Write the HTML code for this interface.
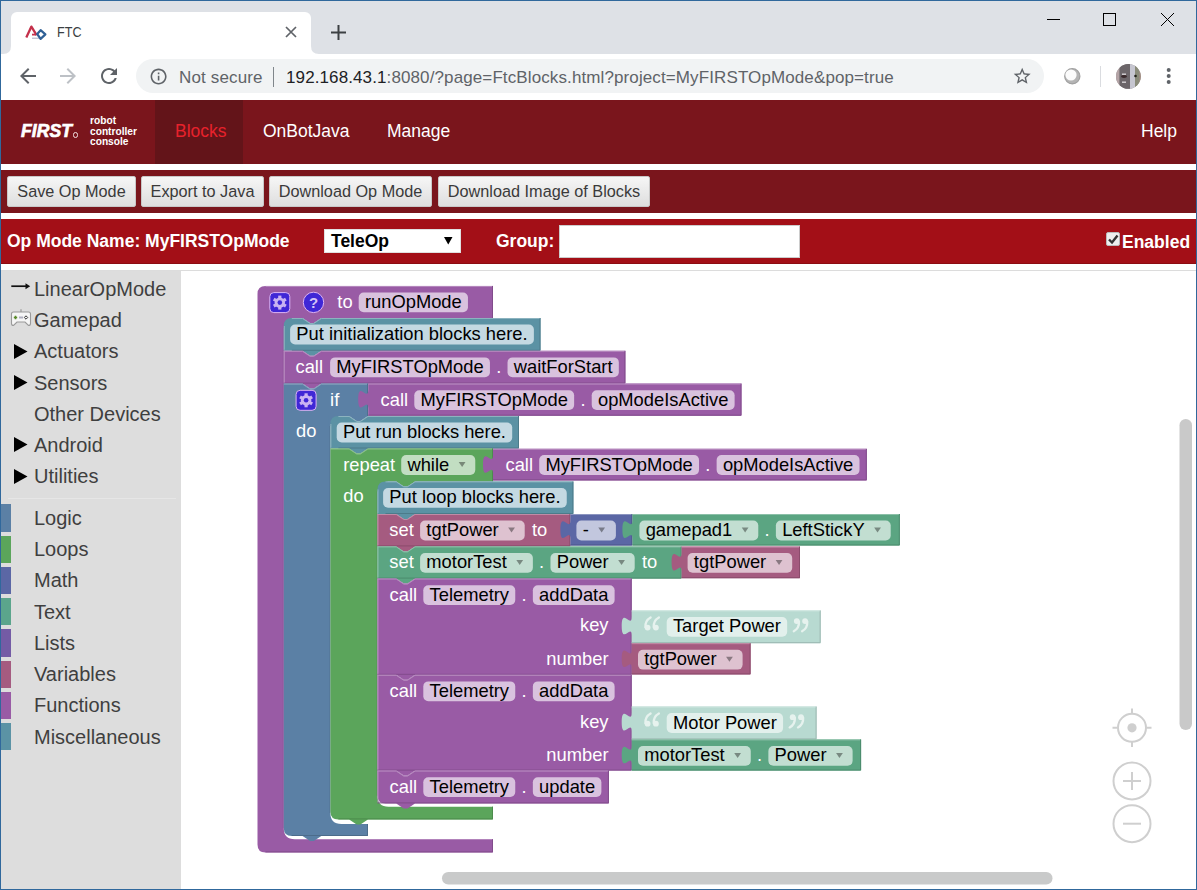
<!DOCTYPE html>
<html><head><meta charset="utf-8">
<style>
*{box-sizing:border-box;margin:0;padding:0}
html,body{width:1197px;height:890px;overflow:hidden;background:#fff;font-family:"Liberation Sans",sans-serif;position:relative}
.a{position:absolute}
#tabstrip{left:0;top:0;width:1197px;height:54px;background:#dee1e6}
#tab{left:10.5px;top:12px;width:300.5px;height:42px;background:#fff;border-radius:6px 6px 0 0}
#toolbar{left:0;top:54px;width:1197px;height:46px;background:#fff}
#omni{left:136px;top:59px;width:908px;height:34px;background:#f1f3f4;border-radius:17px}
.ct{color:#3c4043;font-size:17px;white-space:nowrap}
#hdr{left:0;top:100px;width:1197px;height:63.5px;background:#7a151c}
#hdrsel{left:155px;top:100px;width:88.3px;height:63.5px;background:#631419}
.nav{color:#fff;font-size:17.5px;top:121px}
#btnrow{left:0;top:170px;width:1197px;height:42.5px;background:#7a151c}
.btn{top:176px;height:31px;background:linear-gradient(#f6f6f6,#dedede);border:1px solid #c8c8c8;border-radius:2px;color:#3a3a3a;font-size:16.25px;line-height:29px;text-align:center;white-space:nowrap}
#oprow{left:0;top:219px;width:1197px;height:44.5px;background:#a30f17;box-shadow:inset 0 -1px #8c0c12}
.lbl{color:#fff;font-weight:bold;font-size:17.5px;top:231.2px;white-space:nowrap}
#toolbox{left:0;top:270.5px;width:180.7px;height:620px;background:#dddddd}
.ti{left:34px;font-size:20px;color:#3f3f3f;white-space:nowrap}
.cb{left:1px;width:9.8px;height:28px}
#border{left:0;top:0;width:1197px;height:890px;border:1px solid #30689c;border-right-width:1px;pointer-events:none}
</style></head><body>

<div class="a" id="tabstrip"></div>
<div class="a" id="tab"></div>
<svg class="a" style="left:2.5px;top:46px" width="11" height="8"><path d="M0 8 Q8 8 8 0 L11 0 L11 8Z" fill="#fff"/></svg>
<svg class="a" style="left:308px;top:46px" width="11" height="8"><path d="M11 8 Q3 8 3 0 L0 0 L0 8Z" fill="#fff"/></svg>
<svg class="a" style="left:22px;top:22px" width="28" height="22" viewBox="0 0 28 22">
 <path d="M4.3 15.4 L9.4 4.6 L14.6 13.2" fill="none" stroke="#c4304a" stroke-width="2.3" stroke-linejoin="round"/>
 <path d="M10 12.6 H14.2" stroke="#c4304a" stroke-width="1.8"/>
 <path d="M10 16.2 H18" stroke="#a8a8c0" stroke-width="1"/>
 <path d="M15.2 12 L18.6 8.2 L23.4 12.4 L18.6 16.9 Z" fill="none" stroke="#2f6096" stroke-width="2.2" stroke-linejoin="round"/>
</svg>
<div class="a ct" style="left:56.5px;top:23px;font-size:15px;color:#3c4043;transform:scaleX(0.84);transform-origin:0 0">FTC</div>
<svg class="a" style="left:285px;top:26px" width="12" height="12"><path d="M1 1L11 11M11 1L1 11" stroke="#5f6368" stroke-width="1.7"/></svg>
<svg class="a" style="left:330px;top:24px" width="17" height="17"><path d="M8.5 1V16M1 8.5H16" stroke="#3c4043" stroke-width="2"/></svg>
<svg class="a" style="left:1046px;top:14px" width="16" height="12"><path d="M1 5.5H14" stroke="#000" stroke-width="1"/></svg>
<svg class="a" style="left:1102px;top:12px" width="16" height="16"><rect x="1.5" y="1.5" width="12" height="12" fill="none" stroke="#000" stroke-width="1"/></svg>
<svg class="a" style="left:1160px;top:12px" width="16" height="16"><path d="M1 1L14 14M14 1L1 14" stroke="#000" stroke-width="1"/></svg>
<div class="a" id="toolbar"></div>
<div class="a" id="omni"></div>
<svg class="a" style="left:16.4px;top:63.8px" width="24" height="24" viewBox="0 0 24 24"><path d="M20 11H7.83l5.59-5.59L12 4l-8 8 8 8 1.41-1.41L7.83 13H20v-2z" fill="#5f6368"/></svg>
<svg class="a" style="left:56.2px;top:63.8px" width="24" height="24" viewBox="0 0 24 24"><path d="M12 4l-1.41 1.41L16.17 11H4v2h12.17l-5.58 5.59L12 20l8-8z" fill="#bdc1c6"/></svg>
<svg class="a" style="left:96.7px;top:64px" width="24" height="24" viewBox="0 0 24 24"><path d="M17.65 6.35C16.2 4.9 14.21 4 12 4c-4.42 0-7.99 3.58-7.99 8s3.57 8 7.99 8c3.73 0 6.84-2.55 7.73-6h-2.08c-.82 2.33-3.04 4-5.65 4-3.31 0-6-2.690-6-6s2.69-6 6-6c1.66 0 3.14.69 4.22 1.78L13 11h7V4l-2.35 2.35z" fill="#5f6368"/></svg>
<svg class="a" style="left:148.8px;top:66.8px" width="19.2" height="19.2" viewBox="0 0 24 24"><path d="M11 7h2v2h-2zm0 4h2v6h-2zm1-9C6.480 2 2 6.48 2 12s4.48 10 10 10 10-4.48 10-10S17.52 2 12 2zm0 18c-4.41 0-8-3.59-8-8s3.59-8 8-8 8 3.59 8 8-3.59 8-8 8z" fill="#5f6368"/></svg>
<div class="a ct" style="left:179px;top:67.5px;color:#5f6368;letter-spacing:0.15px">Not secure</div>
<div class="a" style="left:272.5px;top:67px;width:1px;height:20px;background:#80868b"></div>
<div class="a ct" style="left:286px;top:67.5px;color:#202124;letter-spacing:0.11px">192.168.43.1<span style="color:#5f6368">:8080/?page=FtcBlocks.html?project=MyFIRSTOpMode&amp;pop=true</span></div>
<svg class="a" style="left:1011.8px;top:65.8px" width="20.4" height="20.4" viewBox="0 0 24 24"><path d="M22 9.24l-7.19-.62L12 2 9.19 8.63 2 9.240l5.46 4.73L5.82 21 12 17.27 18.18 21l-1.63-7.03L22 9.24zM12 15.4l-3.76 2.27 1-4.28-3.32-2.88 4.38-.38L12 6.1l1.71 4.04 4.38.38-3.32 2.88 1 4.28L12 15.4z" fill="#5f6368"/></svg>
<svg class="a" style="left:1062px;top:66px" width="20" height="20"><circle cx="10.3" cy="10.3" r="7.6" fill="#b4b4b4" stroke="#a0a0a0" stroke-width="1.2"/><circle cx="9" cy="9" r="5.6" fill="#fbfbfb"/></svg>
<div class="a" style="left:1100px;top:66px;width:1px;height:21px;background:#dadce0"></div>
<svg class="a" style="left:1116px;top:64px" width="25" height="25"><defs><clipPath id="av"><circle cx="12.4" cy="12.4" r="12.4"/></clipPath></defs><g clip-path="url(#av)"><rect width="25" height="25" fill="#9a9294"/><rect x="0" width="3.5" height="25" fill="#b4a4a6"/><rect x="3.5" width="10.5" height="25" fill="#6c666a"/><rect x="14" width="5" height="25" fill="#c6c6d0"/><rect x="19" width="4.5" height="25" fill="#8a8c7a"/><rect x="23.5" width="2" height="25" fill="#a08a7c"/><ellipse cx="8" cy="12.5" rx="3" ry="1.4" fill="#3a2a2c"/><circle cx="19.5" cy="12" r="1.3" fill="#24241c"/><rect x="6" y="9.5" width="4" height="1.4" fill="#d8d4d8"/><rect x="6" y="17.5" width="4" height="1.4" fill="#d8d4d8"/></g></svg>
<svg class="a" style="left:1164px;top:66px" width="10" height="20"><circle cx="4.7" cy="4" r="2" fill="#5f6368"/><circle cx="4.7" cy="10" r="2" fill="#5f6368"/><circle cx="4.7" cy="16" r="2" fill="#5f6368"/></svg>
<div class="a" id="hdr"></div>
<div class="a" id="hdrsel"></div>
<div class="a" style="left:21px;top:121px;color:#fff;font-weight:bold;font-style:italic;font-size:17.5px;letter-spacing:0.1px;-webkit-text-stroke:0.7px #fff">FIRST</div>
<div class="a" style="left:72.5px;top:132px;width:5.5px;height:5.5px;border:1.2px solid #f0e0e0;border-radius:50%"></div>
<div class="a" style="left:90px;top:115.8px;color:#fff;font-weight:bold;font-size:10.2px;line-height:10.8px">robot<br>controller<br>console</div>
<div class="a nav" style="left:175px;color:#e8222c">Blocks</div>
<div class="a nav" style="left:263px">OnBotJava</div>
<div class="a nav" style="left:387px">Manage</div>
<div class="a nav" style="left:1141px">Help</div>
<div class="a" id="btnrow"></div>
<div class="a btn" style="left:7px;width:129px">Save Op Mode</div>
<div class="a btn" style="left:141px;width:123px">Export to Java</div>
<div class="a btn" style="left:269px;width:163px">Download Op Mode</div>
<div class="a btn" style="left:438px;width:212px">Download Image of Blocks</div>
<div class="a" id="oprow"></div>
<div class="a lbl" style="left:7px">Op Mode Name: MyFIRSTOpMode</div>
<div class="a" style="left:324px;top:229px;width:137px;height:24px;background:#fff;border:1px solid #e0e0e0"></div>
<div class="a" style="left:331px;top:231.4px;color:#000;font-weight:bold;font-size:17.5px">TeleOp</div>
<svg class="a" style="left:444px;top:237px" width="9" height="8"><path d="M0 0H8.5L4.25 7.5Z" fill="#000"/></svg>
<div class="a lbl" style="left:496px">Group:</div>
<div class="a" style="left:559px;top:225px;width:241px;height:33px;background:#fff;border:1px solid #ccc"></div>
<div class="a" style="left:1106px;top:232px;width:14px;height:14px;background:#eee;border:1px solid #bbb;border-radius:2px"></div>
<svg class="a" style="left:1107px;top:233px" width="12" height="12"><path d="M2 6.5L5 9.5L10.5 2.5" fill="none" stroke="#333" stroke-width="2.4"/></svg>
<div class="a lbl" style="left:1122px;top:232.3px">Enabled</div>
<div class="a" style="left:0;top:269.5px;width:1197px;height:1px;background:#dcdcdc"></div>
<div class="a" id="toolbox"></div>
<div class="a ti" style="top:278.9px;line-height:20px;height:20px"><span style="position:relative;top:0">LinearOpMode</span></div>
<div class="a ti" style="top:310.1px;line-height:20px;height:20px"><span style="position:relative;top:0">Gamepad</span></div>
<div class="a ti" style="top:341.4px;line-height:20px;height:20px"><span style="position:relative;top:0">Actuators</span></div>
<div class="a ti" style="top:372.6px;line-height:20px;height:20px"><span style="position:relative;top:0">Sensors</span></div>
<div class="a ti" style="top:403.9px;line-height:20px;height:20px"><span style="position:relative;top:0">Other Devices</span></div>
<div class="a ti" style="top:435.1px;line-height:20px;height:20px"><span style="position:relative;top:0">Android</span></div>
<div class="a ti" style="top:466.4px;line-height:20px;height:20px"><span style="position:relative;top:0">Utilities</span></div>
<div class="a cb" style="top:504.2px;height:27.4px;background:#5b80a5"></div>
<div class="a ti" style="top:507.9px;line-height:20px;height:20px">Logic</div>
<div class="a cb" style="top:535.5px;height:27.4px;background:#5ba55b"></div>
<div class="a ti" style="top:539.1px;line-height:20px;height:20px">Loops</div>
<div class="a cb" style="top:566.7px;height:27.4px;background:#5b67a5"></div>
<div class="a ti" style="top:570.4px;line-height:20px;height:20px">Math</div>
<div class="a cb" style="top:598.0px;height:27.4px;background:#5ba58c"></div>
<div class="a ti" style="top:601.6px;line-height:20px;height:20px">Text</div>
<div class="a cb" style="top:629.2px;height:27.4px;background:#745ba5"></div>
<div class="a ti" style="top:632.9px;line-height:20px;height:20px">Lists</div>
<div class="a cb" style="top:660.5px;height:27.4px;background:#a55b80"></div>
<div class="a ti" style="top:664.1px;line-height:20px;height:20px">Variables</div>
<div class="a cb" style="top:691.7px;height:27.4px;background:#995ba5"></div>
<div class="a ti" style="top:695.4px;line-height:20px;height:20px">Functions</div>
<div class="a cb" style="top:723.0px;height:27.4px;background:#5b93a5"></div>
<div class="a ti" style="top:726.6px;line-height:20px;height:20px">Miscellaneous</div>
<div class="a" style="left:8px;top:497.5px;width:168px;height:1px;background:#e6e6e6"></div>
<svg class="a" style="left:11px;top:282px" width="20" height="9"><path d="M0.3 4.2H16" stroke="#111" stroke-width="1.7"/><path d="M14.5 1.2L19.2 4.2L14.5 7.3Z" fill="#111"/></svg>
<svg class="a" style="left:10px;top:308px" width="22" height="19" viewBox="0 0 22 19"><path d="M11 1.2V4" stroke="#999" stroke-width="1.2"/><path d="M1.5 6Q1.5 4 3.5 4H18.5Q20.5 4 20.5 6V15.5Q20.5 17.5 18.5 17.5L15 14H7L3.5 17.5Q1.5 17.5 1.5 15.5Z" fill="#f6f6f6" stroke="#9a9a9a" stroke-width="1.1"/><path d="M5.5 7.8V11.2M3.8 9.5H7.2" stroke="#5a8a2a" stroke-width="1.6"/><rect x="9" y="8.5" width="4" height="2" fill="#b0b0c0"/><path d="M16 7.8L17.7 9.5L16 11.2L14.3 9.5Z" fill="none" stroke="#333" stroke-width="1"/></svg>
<svg class="a" style="left:14px;top:343.5px" width="14" height="15"><path d="M0 0L13.5 7.5L0 15Z" fill="#000"/></svg>
<svg class="a" style="left:14px;top:374.8px" width="14" height="15"><path d="M0 0L13.5 7.5L0 15Z" fill="#000"/></svg>
<svg class="a" style="left:14px;top:437.2px" width="14" height="15"><path d="M0 0L13.5 7.5L0 15Z" fill="#000"/></svg>
<svg class="a" style="left:14px;top:468.5px" width="14" height="15"><path d="M0 0L13.5 7.5L0 15Z" fill="#000"/></svg>
<!--BLOCKS--><svg class="a" style="left:0;top:0" width="1197" height="890" font-family="Liberation Sans" font-size="18.33">
<rect x="1179.5" y="419" width="12.5" height="311" rx="6.25" fill="#c9c9c9"/>
<rect x="442" y="872" width="610.5" height="12.5" rx="6.25" fill="#c9caca"/>
<g fill="none" stroke="#cfcfcf" stroke-width="2">
<circle cx="1132" cy="727.8" r="14"/>
<path d="M1132 708.5V713.5M1132 742V747M1112.5 727.8H1117.5M1146.5 727.8H1151.5"/>
<circle cx="1132" cy="781" r="18.5"/>
<path d="M1123 781H1141M1132 772V790"/>
<circle cx="1132" cy="823.7" r="18.5"/>
<path d="M1123 823.7H1141"/>
</g>
<circle cx="1132" cy="727.8" r="4.6" fill="#cfcfcf"/>
<path d="M257.50 293.90 Q257.50 285.90 265.50 285.90 L493.00 285.90 L493.00 318.00 L321.30 318.00 l-7.5 5 l-3.75 0 l-7.5 -5 L283.80 318.00 L283.80 828.30 Q283.80 839.30 294.80 839.30 L493.00 839.30 L493.00 852.40 L265.50 852.40 Q257.50 852.40 257.50 844.40 Z" fill="#995ba5"/>
<path d="M265.50 286.40 H492.00" fill="none" stroke="#b88cc0" stroke-width="1"/>
<path d="M492.50 285.90 V318.00 M492.50 839.30 V851.90 H265.50" fill="none" stroke="#814c8b" stroke-width="1"/>
<path d="M283.30 323.00 V828.30" fill="none" stroke="#814c8b" stroke-width="1" stroke-opacity="0.5"/>
<rect x="269.80" y="292.60" width="20" height="20" rx="4" fill="#3f27d6" stroke="#dcb4f4" stroke-width="1"/>
<g fill="#c9b3f2"><rect x="278.20" y="295.60" width="3.2" height="14" transform="rotate(0 279.80 302.60)"/><rect x="278.20" y="295.60" width="3.2" height="14" transform="rotate(60 279.80 302.60)"/><rect x="278.20" y="295.60" width="3.2" height="14" transform="rotate(120 279.80 302.60)"/><circle cx="279.80" cy="302.60" r="5.2"/></g>
<circle cx="279.80" cy="302.60" r="2.3" fill="#3f27d6"/>
<circle cx="313.5" cy="302.4" r="10.2" fill="#3f27d6" stroke="#dcb4f4" stroke-width="1"/>
<text x="313.5" y="307.59999999999997" fill="#d4c4f6" font-weight="bold" font-size="15" text-anchor="middle">?</text>
<text x="337.30" y="307.90" fill="#fff">to</text>
<rect x="358.70" y="292.50" width="109.25" height="19.8" rx="5" fill="#d9c2de"/>
<text x="364.95" y="307.90" fill="#000">runOpMode</text>
<rect x="282.30" y="317.00" width="11.5" height="11" fill="#995ba5"/>
<path d="M283.80 326.00 Q283.80 318.00 291.80 318.00 L302.55 318.00 l7.5 5 l3.75 0 l7.5 -5 L540.50 318.00 L540.50 350.80 L321.30 350.80 l-7.5 5 l-3.75 0 l-7.5 -5 L283.80 350.80 Z" fill="#5b92a4"/>
<path d="M540.00 318.00 V350.30 H291.80" fill="none" stroke="#4c7b8a" stroke-width="1"/><path d="M291.80 318.50 H302.55 l7.5 5 h3.75 l7.5 -5 H539.50" fill="none" stroke="#8cb3bf" stroke-width="1"/><path d="M284.30 326.00 V349.80" fill="none" stroke="#8cb3bf" stroke-width="1"/>
<rect x="290.10" y="324.60" width="243.78" height="19.8" rx="5" fill="#c4d9e2"/>
<text x="296.35" y="340.00" fill="#000">Put initialization blocks here.</text>
<path d="M283.80 350.80 L302.55 350.80 l7.5 5 l3.75 0 l7.5 -5 L625.40 350.80 L625.40 383.60 L321.30 383.60 l-7.5 5 l-3.75 0 l-7.5 -5 L283.80 383.60 Z" fill="#995ba5"/>
<path d="M624.90 350.80 V383.10 H283.80" fill="none" stroke="#814c8b" stroke-width="1"/><path d="M283.80 351.30 H302.55 l7.5 5 h3.75 l7.5 -5 H624.40" fill="none" stroke="#b88cc0" stroke-width="1"/><path d="M284.30 350.80 V382.60" fill="none" stroke="#b88cc0" stroke-width="1"/>
<text x="295.50" y="372.80" fill="#fff">call</text>
<rect x="330.10" y="357.40" width="159.83" height="19.8" rx="5" fill="#d9c2de"/>
<text x="336.35" y="372.80" fill="#000">MyFIRSTOpMode</text>
<text x="496.18" y="372.80" fill="#fff">.</text>
<rect x="507.53" y="357.40" width="111.30" height="19.8" rx="5" fill="#d9c2de"/>
<text x="513.78" y="372.80" fill="#000">waitForStart</text>
<path d="M283.80 383.60 L302.55 383.60 l7.5 5 l3.75 0 l7.5 -5 L368.20 383.60 L368.20 416.00 L367.90 416.00 l-7.5 5 l-3.75 0 l-7.5 -5 L330.40 416.00 L330.40 813.00 Q330.40 824.00 341.40 824.00 L368.00 824.00 L368.00 836.00 L321.30 836.00 l-7.5 5 l-3.75 0 l-7.5 -5 L291.80 836.00 Q283.80 836.00 283.80 828.00 Z" fill="#5b80a5"/>
<path d="M283.80 384.10 H302.55 l7.5 5 h3.75 l7.5 -5 H367.20" fill="none" stroke="#8ca6c0" stroke-width="1"/>
<path d="M367.70 383.60 V416.00 M367.50 824.00 V835.50 H291.80" fill="none" stroke="#4c6c8b" stroke-width="1"/>
<path d="M329.90 421.00 V813.00" fill="none" stroke="#4c6c8b" stroke-width="1" stroke-opacity="0.5"/>
<rect x="296.10" y="390.30" width="20" height="20" rx="4" fill="#3f27d6" stroke="#dcb4f4" stroke-width="1"/>
<g fill="#c9b3f2"><rect x="304.50" y="393.30" width="3.2" height="14" transform="rotate(0 306.10 400.30)"/><rect x="304.50" y="393.30" width="3.2" height="14" transform="rotate(60 306.10 400.30)"/><rect x="304.50" y="393.30" width="3.2" height="14" transform="rotate(120 306.10 400.30)"/><circle cx="306.10" cy="400.30" r="5.2"/></g>
<circle cx="306.10" cy="400.30" r="2.3" fill="#3f27d6"/>
<text x="330.10" y="405.60" fill="#fff">if</text>
<text x="296.00" y="436.50" fill="#fff">do</text>
<path d="M368.20 383.60 L741.50 383.60 L741.50 415.70 L368.20 415.70 L368.20 408.60 c0 -12.5 -10 10 -10 -9.375 s10 3.125 10 -9.375 Z" fill="#995ba5"/>
<path d="M741.00 383.60 V415.20 H368.20" fill="none" stroke="#814c8b" stroke-width="1"/><path d="M368.20 384.10 H740.50" fill="none" stroke="#b88cc0" stroke-width="1"/>
<text x="380.60" y="405.60" fill="#fff">call</text>
<rect x="414.30" y="390.20" width="159.83" height="19.8" rx="5" fill="#d9c2de"/>
<text x="420.55" y="405.60" fill="#000">MyFIRSTOpMode</text>
<text x="580.38" y="405.60" fill="#fff">.</text>
<rect x="591.73" y="390.20" width="142.89" height="19.8" rx="5" fill="#d9c2de"/>
<text x="597.98" y="405.60" fill="#000">opModeIsActive</text>
<rect x="328.90" y="415.00" width="11.5" height="11" fill="#5b80a5"/>
<path d="M330.40 424.00 Q330.40 416.00 338.40 416.00 L349.15 416.00 l7.5 5 l3.75 0 l7.5 -5 L519.00 416.00 L519.00 448.50 L367.90 448.50 l-7.5 5 l-3.75 0 l-7.5 -5 L330.40 448.50 Z" fill="#5b92a4"/>
<path d="M518.50 416.00 V448.00 H338.40" fill="none" stroke="#4c7b8a" stroke-width="1"/><path d="M338.40 416.50 H349.15 l7.5 5 h3.75 l7.5 -5 H518.00" fill="none" stroke="#8cb3bf" stroke-width="1"/><path d="M330.90 424.00 V447.50" fill="none" stroke="#8cb3bf" stroke-width="1"/>
<rect x="336.70" y="422.60" width="175.50" height="19.8" rx="5" fill="#c4d9e2"/>
<text x="342.95" y="438.00" fill="#000">Put run blocks here.</text>
<path d="M330.40 448.50 L349.15 448.50 l7.5 5 l3.75 0 l7.5 -5 L493.00 448.50 L493.00 481.40 L415.00 481.40 l-7.5 5 l-3.75 0 l-7.5 -5 L377.50 481.40 L377.50 795.70 Q377.50 806.70 388.50 806.70 L493.00 806.70 L493.00 819.40 L367.90 819.40 l-7.5 5 l-3.75 0 l-7.5 -5 L338.40 819.40 Q330.40 819.40 330.40 811.40 Z" fill="#5ba55b"/>
<path d="M330.40 449.00 H349.15 l7.5 5 h3.75 l7.5 -5 H492.00" fill="none" stroke="#8cc08c" stroke-width="1"/>
<path d="M492.50 448.50 V481.40 M492.50 806.70 V818.90 H338.40" fill="none" stroke="#4c8b4c" stroke-width="1"/>
<path d="M377.00 486.40 V795.70" fill="none" stroke="#4c8b4c" stroke-width="1" stroke-opacity="0.5"/>
<text x="343.20" y="470.50" fill="#fff">repeat</text>
<rect x="401.20" y="455.10" width="74.07" height="19.8" rx="5" fill="#c2dec2"/>
<text x="407.45" y="470.50" fill="#000">while</text>
<path d="M458.72 462.00 h6.8 l-3.4 5 z" fill="#000" fill-opacity="0.38"/>
<text x="343.20" y="501.50" fill="#fff">do</text>
<path d="M493.00 448.80 L866.80 448.80 L866.80 480.40 L493.00 480.40 L493.00 473.80 c0 -12.5 -10 10 -10 -9.375 s10 3.125 10 -9.375 Z" fill="#995ba5"/>
<path d="M866.30 448.80 V479.90 H493.00" fill="none" stroke="#814c8b" stroke-width="1"/><path d="M493.00 449.30 H865.80" fill="none" stroke="#b88cc0" stroke-width="1"/>
<text x="505.50" y="470.50" fill="#fff">call</text>
<rect x="539.20" y="455.10" width="159.83" height="19.8" rx="5" fill="#d9c2de"/>
<text x="545.45" y="470.50" fill="#000">MyFIRSTOpMode</text>
<text x="705.28" y="470.50" fill="#fff">.</text>
<rect x="716.63" y="455.10" width="142.89" height="19.8" rx="5" fill="#d9c2de"/>
<text x="722.88" y="470.50" fill="#000">opModeIsActive</text>
<rect x="376.00" y="480.40" width="11.5" height="11" fill="#5ba55b"/>
<path d="M377.50 489.40 Q377.50 481.40 385.50 481.40 L396.25 481.40 l7.5 5 l3.75 0 l7.5 -5 L573.40 481.40 L573.40 514.00 L415.00 514.00 l-7.5 5 l-3.75 0 l-7.5 -5 L377.50 514.00 Z" fill="#5b92a4"/>
<path d="M572.90 481.40 V513.50 H385.50" fill="none" stroke="#4c7b8a" stroke-width="1"/><path d="M385.50 481.90 H396.25 l7.5 5 h3.75 l7.5 -5 H572.40" fill="none" stroke="#8cb3bf" stroke-width="1"/><path d="M378.00 489.40 V513.00" fill="none" stroke="#8cb3bf" stroke-width="1"/>
<rect x="383.10" y="488.00" width="183.66" height="19.8" rx="5" fill="#c4d9e2"/>
<text x="389.35" y="503.40" fill="#000">Put loop blocks here.</text>
<path d="M377.50 514.00 L396.25 514.00 l7.5 5 l3.75 0 l7.5 -5 L570.40 514.00 L570.40 546.40 L415.00 546.40 l-7.5 5 l-3.75 0 l-7.5 -5 L377.50 546.40 Z" fill="#a55b80"/>
<path d="M569.90 514.00 V545.90 H377.50" fill="none" stroke="#8b4c6c" stroke-width="1"/><path d="M377.50 514.50 H396.25 l7.5 5 h3.75 l7.5 -5 H569.40" fill="none" stroke="#c08ca6" stroke-width="1"/><path d="M378.00 514.00 V545.40" fill="none" stroke="#c08ca6" stroke-width="1"/>
<text x="389.30" y="536.00" fill="#fff">set</text>
<rect x="420.10" y="520.60" width="104.61" height="19.8" rx="5" fill="#dec2d0"/>
<text x="426.35" y="536.00" fill="#000">tgtPower</text>
<path d="M508.16 527.50 h6.8 l-3.4 5 z" fill="#000" fill-opacity="0.38"/>
<text x="532.00" y="536.00" fill="#fff">to</text>
<path d="M570.40 514.00 L632.40 514.00 L632.40 545.50 L570.40 545.50 L570.40 539.00 c0 -12.5 -10 10 -10 -9.375 s10 3.125 10 -9.375 Z" fill="#5b67a5"/>
<path d="M631.90 514.00 V545.00 H570.40" fill="none" stroke="#4c578b" stroke-width="1"/><path d="M570.40 514.50 H631.40" fill="none" stroke="#8c95c0" stroke-width="1"/>
<rect x="576.40" y="520.60" width="39.50" height="19.8" rx="5" fill="#c2c7de"/>
<text x="582.65" y="536.00" fill="#000">-</text>
<path d="M598.26 527.50 h6.8 l-3.4 5 z" fill="#000" fill-opacity="0.38"/>
<path d="M632.40 514.00 L899.80 514.00 L899.80 545.50 L632.40 545.50 L632.40 539.00 c0 -12.5 -10 10 -10 -9.375 s10 3.125 10 -9.375 Z" fill="#5ba582"/>
<path d="M899.30 514.00 V545.00 H632.40" fill="none" stroke="#4c8b6d" stroke-width="1"/><path d="M632.40 514.50 H898.80" fill="none" stroke="#8cc0a8" stroke-width="1"/>
<rect x="639.40" y="520.60" width="118.88" height="19.8" rx="5" fill="#c2ded1"/>
<text x="645.65" y="536.00" fill="#000">gamepad1</text>
<path d="M741.73 527.50 h6.8 l-3.4 5 z" fill="#000" fill-opacity="0.38"/>
<text x="764.53" y="536.00" fill="#fff">.</text>
<rect x="775.88" y="520.60" width="114.82" height="19.8" rx="5" fill="#c2ded1"/>
<text x="782.13" y="536.00" fill="#000">LeftStickY</text>
<path d="M874.14 527.50 h6.8 l-3.4 5 z" fill="#000" fill-opacity="0.38"/>
<path d="M377.50 546.40 L396.25 546.40 l7.5 5 l3.75 0 l7.5 -5 L681.60 546.40 L681.60 578.60 L415.00 578.60 l-7.5 5 l-3.75 0 l-7.5 -5 L377.50 578.60 Z" fill="#5ba582"/>
<path d="M681.10 546.40 V578.10 H377.50" fill="none" stroke="#4c8b6d" stroke-width="1"/><path d="M377.50 546.90 H396.25 l7.5 5 h3.75 l7.5 -5 H680.60" fill="none" stroke="#8cc0a8" stroke-width="1"/><path d="M378.00 546.40 V577.60" fill="none" stroke="#8cc0a8" stroke-width="1"/>
<text x="389.30" y="568.40" fill="#fff">set</text>
<rect x="420.10" y="553.00" width="112.77" height="19.8" rx="5" fill="#c2ded1"/>
<text x="426.35" y="568.40" fill="#000">motorTest</text>
<path d="M516.32 559.90 h6.8 l-3.4 5 z" fill="#000" fill-opacity="0.38"/>
<text x="539.12" y="568.40" fill="#fff">.</text>
<rect x="550.47" y="553.00" width="84.24" height="19.8" rx="5" fill="#c2ded1"/>
<text x="556.72" y="568.40" fill="#000">Power</text>
<path d="M618.16 559.90 h6.8 l-3.4 5 z" fill="#000" fill-opacity="0.38"/>
<text x="642.00" y="568.40" fill="#fff">to</text>
<path d="M681.60 546.60 L800.00 546.60 L800.00 578.20 L681.60 578.20 L681.60 571.60 c0 -12.5 -10 10 -10 -9.375 s10 3.125 10 -9.375 Z" fill="#a55b80"/>
<path d="M799.50 546.60 V577.70 H681.60" fill="none" stroke="#8b4c6c" stroke-width="1"/><path d="M681.60 547.10 H799.00" fill="none" stroke="#c08ca6" stroke-width="1"/>
<rect x="687.60" y="553.00" width="104.61" height="19.8" rx="5" fill="#dec2d0"/>
<text x="693.85" y="568.40" fill="#000">tgtPower</text>
<path d="M775.66 559.90 h6.8 l-3.4 5 z" fill="#000" fill-opacity="0.38"/>
<path d="M377.50 578.60 L396.25 578.60 l7.5 5 l3.75 0 l7.5 -5 L631.70 578.60 L631.70 674.80 L415.00 674.80 l-7.5 5 l-3.75 0 l-7.5 -5 L377.50 674.80 Z" fill="#995ba5"/>
<path d="M631.20 578.60 V674.30 H377.50" fill="none" stroke="#814c8b" stroke-width="1"/><path d="M377.50 579.10 H396.25 l7.5 5 h3.75 l7.5 -5 H630.70" fill="none" stroke="#b88cc0" stroke-width="1"/><path d="M378.00 578.60 V673.80" fill="none" stroke="#b88cc0" stroke-width="1"/>
<text x="389.60" y="600.60" fill="#fff">call</text>
<rect x="423.30" y="585.20" width="91.95" height="19.8" rx="5" fill="#d9c2de"/>
<text x="429.55" y="600.60" fill="#000">Telemetry</text>
<text x="521.50" y="600.60" fill="#fff">.</text>
<rect x="532.85" y="585.20" width="81.77" height="19.8" rx="5" fill="#d9c2de"/>
<text x="539.10" y="600.60" fill="#000">addData</text>
<text x="608.50" y="631.40" fill="#fff" text-anchor="end">key</text>
<text x="608.50" y="664.70" fill="#fff" text-anchor="end">number</text>
<path d="M631.70 610.40 L820.67 610.40 L820.67 643.20 L631.70 643.20 L631.70 635.40 c0 -12.5 -10 10 -10 -9.375 s10 3.125 10 -9.375 Z" fill="#b8dad1"/>
<path d="M820.17 610.40 V642.70 H631.70" fill="none" stroke="#9bb7b0" stroke-width="1"/><path d="M631.70 610.90 H819.67" fill="none" stroke="#cde5df" stroke-width="1"/>
<g fill="#e6f2ee" transform="translate(647.60 627.60)"><circle cx="0" cy="0" r="2.9"/><path d="M-2.2 -0.5 Q-2.6 -7 3 -10.2" fill="none" stroke="#e6f2ee" stroke-width="2.3" stroke-linecap="round"/></g>
<g fill="#e6f2ee" transform="translate(655.90 627.60)"><circle cx="0" cy="0" r="2.9"/><path d="M-2.2 -0.5 Q-2.6 -7 3 -10.2" fill="none" stroke="#e6f2ee" stroke-width="2.3" stroke-linecap="round"/></g>
<rect x="666.70" y="617.00" width="120.47" height="19.8" rx="5" fill="#e2f0ec"/>
<text x="672.95" y="632.40" fill="#000">Target Power</text>
<g fill="#e6f2ee" transform="translate(796.77 621.10) rotate(180)"><circle cx="0" cy="0" r="2.9"/><path d="M-2.2 -0.5 Q-2.6 -7 3 -10.2" fill="none" stroke="#e6f2ee" stroke-width="2.3" stroke-linecap="round"/></g>
<g fill="#e6f2ee" transform="translate(805.07 621.10) rotate(180)"><circle cx="0" cy="0" r="2.9"/><path d="M-2.2 -0.5 Q-2.6 -7 3 -10.2" fill="none" stroke="#e6f2ee" stroke-width="2.3" stroke-linecap="round"/></g>
<path d="M631.70 643.20 L750.60 643.20 L750.60 674.40 L631.70 674.40 L631.70 668.20 c0 -12.5 -10 10 -10 -9.375 s10 3.125 10 -9.375 Z" fill="#a55b80"/>
<path d="M750.10 643.20 V673.90 H631.70" fill="none" stroke="#8b4c6c" stroke-width="1"/><path d="M631.70 643.70 H749.60" fill="none" stroke="#c08ca6" stroke-width="1"/>
<rect x="638.00" y="649.80" width="104.61" height="19.8" rx="5" fill="#dec2d0"/>
<text x="644.25" y="665.20" fill="#000">tgtPower</text>
<path d="M726.06 656.70 h6.8 l-3.4 5 z" fill="#000" fill-opacity="0.38"/>
<path d="M377.50 674.80 L396.25 674.80 l7.5 5 l3.75 0 l7.5 -5 L631.70 674.80 L631.70 770.60 L415.00 770.60 l-7.5 5 l-3.75 0 l-7.5 -5 L377.50 770.60 Z" fill="#995ba5"/>
<path d="M631.20 674.80 V770.10 H377.50" fill="none" stroke="#814c8b" stroke-width="1"/><path d="M377.50 675.30 H396.25 l7.5 5 h3.75 l7.5 -5 H630.70" fill="none" stroke="#b88cc0" stroke-width="1"/><path d="M378.00 674.80 V769.60" fill="none" stroke="#b88cc0" stroke-width="1"/>
<text x="389.60" y="696.80" fill="#fff">call</text>
<rect x="423.30" y="681.40" width="91.95" height="19.8" rx="5" fill="#d9c2de"/>
<text x="429.55" y="696.80" fill="#000">Telemetry</text>
<text x="521.50" y="696.80" fill="#fff">.</text>
<rect x="532.85" y="681.40" width="81.77" height="19.8" rx="5" fill="#d9c2de"/>
<text x="539.10" y="696.80" fill="#000">addData</text>
<text x="608.50" y="727.50" fill="#fff" text-anchor="end">key</text>
<text x="608.50" y="760.90" fill="#fff" text-anchor="end">number</text>
<path d="M631.70 706.50 L816.58 706.50 L816.58 739.40 L631.70 739.40 L631.70 731.50 c0 -12.5 -10 10 -10 -9.375 s10 3.125 10 -9.375 Z" fill="#b8dad1"/>
<path d="M816.08 706.50 V738.90 H631.70" fill="none" stroke="#9bb7b0" stroke-width="1"/><path d="M631.70 707.00 H815.58" fill="none" stroke="#cde5df" stroke-width="1"/>
<g fill="#e6f2ee" transform="translate(647.60 723.70)"><circle cx="0" cy="0" r="2.9"/><path d="M-2.2 -0.5 Q-2.6 -7 3 -10.2" fill="none" stroke="#e6f2ee" stroke-width="2.3" stroke-linecap="round"/></g>
<g fill="#e6f2ee" transform="translate(655.90 723.70)"><circle cx="0" cy="0" r="2.9"/><path d="M-2.2 -0.5 Q-2.6 -7 3 -10.2" fill="none" stroke="#e6f2ee" stroke-width="2.3" stroke-linecap="round"/></g>
<rect x="666.70" y="713.10" width="116.38" height="19.8" rx="5" fill="#e2f0ec"/>
<text x="672.95" y="728.50" fill="#000">Motor Power</text>
<g fill="#e6f2ee" transform="translate(792.68 717.20) rotate(180)"><circle cx="0" cy="0" r="2.9"/><path d="M-2.2 -0.5 Q-2.6 -7 3 -10.2" fill="none" stroke="#e6f2ee" stroke-width="2.3" stroke-linecap="round"/></g>
<g fill="#e6f2ee" transform="translate(800.98 717.20) rotate(180)"><circle cx="0" cy="0" r="2.9"/><path d="M-2.2 -0.5 Q-2.6 -7 3 -10.2" fill="none" stroke="#e6f2ee" stroke-width="2.3" stroke-linecap="round"/></g>
<path d="M631.70 739.40 L861.10 739.40 L861.10 770.60 L631.70 770.60 L631.70 764.40 c0 -12.5 -10 10 -10 -9.375 s10 3.125 10 -9.375 Z" fill="#5ba582"/>
<path d="M860.60 739.40 V770.10 H631.70" fill="none" stroke="#4c8b6d" stroke-width="1"/><path d="M631.70 739.90 H860.10" fill="none" stroke="#8cc0a8" stroke-width="1"/>
<rect x="638.00" y="746.00" width="112.77" height="19.8" rx="5" fill="#c2ded1"/>
<text x="644.25" y="761.40" fill="#000">motorTest</text>
<path d="M734.22 752.90 h6.8 l-3.4 5 z" fill="#000" fill-opacity="0.38"/>
<text x="757.02" y="761.40" fill="#fff">.</text>
<rect x="768.37" y="746.00" width="84.24" height="19.8" rx="5" fill="#c2ded1"/>
<text x="774.62" y="761.40" fill="#000">Power</text>
<path d="M836.06 752.90 h6.8 l-3.4 5 z" fill="#000" fill-opacity="0.38"/>
<path d="M377.50 770.60 L396.25 770.60 l7.5 5 l3.75 0 l7.5 -5 L608.90 770.60 L608.90 803.40 L415.00 803.40 l-7.5 5 l-3.75 0 l-7.5 -5 L385.50 803.40 Q377.50 803.40 377.50 795.40 Z" fill="#995ba5"/>
<path d="M608.40 770.60 V802.90 H377.50" fill="none" stroke="#814c8b" stroke-width="1"/><path d="M377.50 771.10 H396.25 l7.5 5 h3.75 l7.5 -5 H607.90" fill="none" stroke="#b88cc0" stroke-width="1"/><path d="M378.00 770.60 V802.40" fill="none" stroke="#b88cc0" stroke-width="1"/>
<text x="389.60" y="792.60" fill="#fff">call</text>
<rect x="423.30" y="777.20" width="91.95" height="19.8" rx="5" fill="#d9c2de"/>
<text x="429.55" y="792.60" fill="#000">Telemetry</text>
<text x="521.50" y="792.60" fill="#fff">.</text>
<rect x="532.85" y="777.20" width="68.53" height="19.8" rx="5" fill="#d9c2de"/>
<text x="539.10" y="792.60" fill="#000">update</text></svg><!--/BLOCKS-->
<div class="a" id="border"></div>
</body></html>
